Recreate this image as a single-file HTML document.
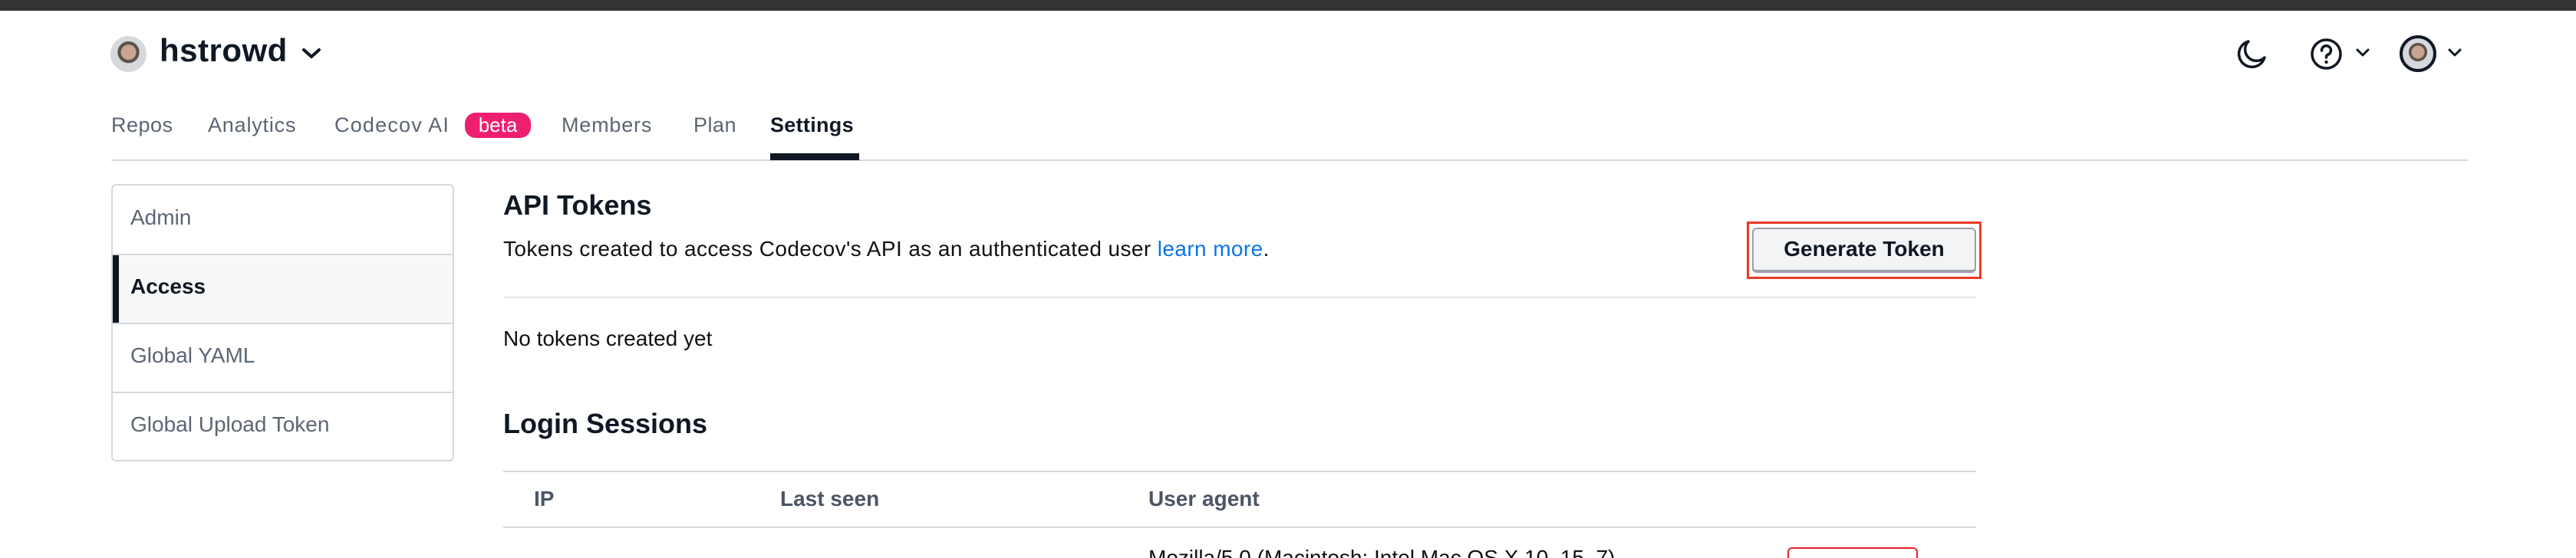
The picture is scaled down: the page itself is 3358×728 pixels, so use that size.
<!DOCTYPE html>
<html style="width:3358px;height:728px;overflow:hidden"><head><meta charset="utf-8"><style>
*{margin:0;padding:0;box-sizing:border-box}
body{width:3358px;height:728px;overflow:hidden;background:#fff;font-family:"Liberation Sans",sans-serif;color:#0f1823;position:relative}
.a{position:absolute;white-space:nowrap}
.tab{font-size:27px;color:#5b6573;top:148px}
.side{font-size:28px;color:#5b6573;left:170px}
</style></head><body>
<div class="a" style="left:0;top:0;width:3358px;height:14px;background:#333"></div>

<div class="a" style="left:144px;top:47px;width:47px;height:47px;border-radius:50%;background:radial-gradient(circle at 50% 45%,#c9a48e 0 28%,#5a544e 29% 40%,#d6d8dc 41%);"></div>
<div class="a" style="left:208px;top:42px;font-size:42px;font-weight:bold;letter-spacing:0.5px">hstrowd</div>
<svg class="a" style="left:393px;top:60px" width="26" height="20" viewBox="0 0 26 20"><path d="M3 5 L13 14 L23 5" fill="none" stroke="#0f1823" stroke-width="4" stroke-linecap="round" stroke-linejoin="round"/></svg>

<svg class="a" style="left:2914px;top:50px" width="42" height="42" viewBox="0 0 42 42"><path d="M17 4 A17 17 0 1 0 38 25 A14 14 0 0 1 17 4 Z" fill="none" stroke="#0f1823" stroke-width="3.5" stroke-linejoin="round"/></svg>
<svg class="a" style="left:3011px;top:49px" width="43" height="43" viewBox="0 0 43 43"><circle cx="21.5" cy="21.5" r="18.5" fill="none" stroke="#0f1823" stroke-width="3.5"/><path d="M15.5 17 A6 6 0 1 1 23 22.5 Q21.5 23.5 21.5 26" fill="none" stroke="#0f1823" stroke-width="3.5" stroke-linecap="round"/><circle cx="21.5" cy="32" r="2.2" fill="#0f1823"/></svg>
<svg class="a" style="left:3071px;top:62px" width="18" height="14" viewBox="0 0 18 14"><path d="M2 3 L9 10 L16 3" fill="none" stroke="#0f1823" stroke-width="3" stroke-linecap="round" stroke-linejoin="round"/></svg>
<div class="a" style="left:3128px;top:46px;width:48px;height:48px;border-radius:50%;border:4px solid #0f1823;background:radial-gradient(circle at 50% 45%,#c9a48e 0 28%,#5a544e 29% 40%,#d6d8dc 41%);"></div>
<svg class="a" style="left:3191px;top:62px" width="18" height="14" viewBox="0 0 18 14"><path d="M2 3 L9 10 L16 3" fill="none" stroke="#0f1823" stroke-width="3" stroke-linecap="round" stroke-linejoin="round"/></svg>

<div class="a tab" style="left:145px;letter-spacing:0.5px">Repos</div>
<div class="a tab" style="left:271px;letter-spacing:0.8px">Analytics</div>
<div class="a tab" style="left:436px;letter-spacing:1.2px">Codecov AI</div>
<div class="a" style="left:606px;top:147px;width:86px;height:33px;border-radius:14px;background:#ee1f6f;color:#fff;font-size:26px;text-align:center;line-height:33px">beta</div>
<div class="a tab" style="left:732px;letter-spacing:0.8px">Members</div>
<div class="a tab" style="left:904px;letter-spacing:0.5px">Plan</div>
<div class="a tab" style="left:1004px;color:#0f1823;font-weight:bold;letter-spacing:0.3px">Settings</div>
<div class="a" style="left:145px;top:208px;width:3072px;height:2px;background:#d5d9de"></div>
<div class="a" style="left:1004px;top:200px;width:116px;height:9px;background:#0f1823"></div>

<div class="a" style="left:145px;top:240px;width:447px;height:362px;border:2px solid #d5d9de;border-radius:6px;overflow:hidden">
  <div style="position:absolute;left:0;top:89px;width:100%;height:2px;background:#d5d9de"></div>
  <div style="position:absolute;left:0;top:91px;width:100%;height:88px;background:#f7f8f8"></div>
  <div style="position:absolute;left:0;top:91px;width:8px;height:88px;background:#0f1823"></div>
  <div style="position:absolute;left:0;top:179px;width:100%;height:2px;background:#d5d9de"></div>
  <div style="position:absolute;left:0;top:269px;width:100%;height:2px;background:#d5d9de"></div>
</div>
<div class="a side" style="top:268px">Admin</div>
<div class="a side" style="top:358px;color:#0f1823;font-weight:bold">Access</div>
<div class="a side" style="top:448px">Global YAML</div>
<div class="a side" style="top:538px">Global Upload Token</div>

<div class="a" style="left:656px;top:247px;font-size:36px;font-weight:bold">API Tokens</div>
<div class="a" style="left:656px;top:309px;font-size:28px;color:#111;letter-spacing:0.4px">Tokens created to access Codecov's API as an authenticated user <span style="color:#0b74e5">learn more</span>.</div>
<div class="a" style="left:2277px;top:289px;width:306px;height:75px;border:3px solid #ec3a24"></div>
<div class="a" style="left:2284px;top:297px;width:292px;height:59px;border:2px solid #9aa0a8;border-bottom-width:4px;border-radius:6px;background:#f3f4f6;font-size:28px;font-weight:bold;text-align:center;line-height:52px">Generate Token</div>
<div class="a" style="left:656px;top:387px;width:1920px;height:2px;background:#e3e6ea"></div>
<div class="a" style="left:656px;top:426px;font-size:28px;color:#111">No tokens created yet</div>
<div class="a" style="left:656px;top:532px;font-size:36px;font-weight:bold">Login Sessions</div>
<div class="a" style="left:656px;top:614px;width:1920px;height:2px;background:#d5d9de"></div>
<div class="a" style="left:696px;top:635px;font-size:28px;font-weight:bold;color:#4b5563">IP</div>
<div class="a" style="left:1017px;top:635px;font-size:28px;font-weight:bold;color:#4b5563">Last seen</div>
<div class="a" style="left:1497px;top:635px;font-size:28px;font-weight:bold;color:#4b5563">User agent</div>
<div class="a" style="left:656px;top:687px;width:1920px;height:2px;background:#d5d9de"></div>
<div class="a" style="left:0;top:700px;width:3358px;height:28px;overflow:hidden">
  <div class="a" style="left:1497px;top:12px;font-size:28px;color:#111">Mozilla/5.0 (Macintosh; Intel Mac OS X 10_15_7)</div>
  <div class="a" style="left:2330px;top:14px;width:170px;height:40px;border:2px solid #e5242b;border-radius:6px"></div>
</div>
</body></html>
